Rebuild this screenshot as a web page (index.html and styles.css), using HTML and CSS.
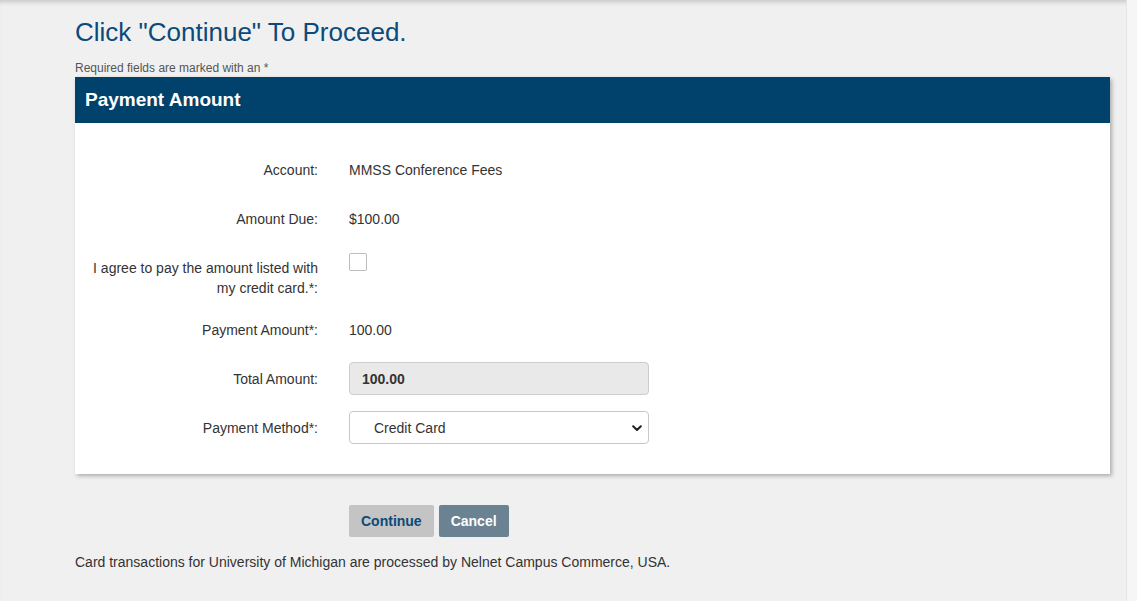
FILE: index.html
```html
<!DOCTYPE html>
<html lang="en">
<head>
<meta charset="utf-8">
<title>Payment Amount</title>
<link rel="stylesheet" href="styles.css">
</head>
<body>
<div class="page">
  <main class="main">
    <h1 class="title">Click "Continue" To Proceed.</h1>
    <p class="required">Required fields are marked with an *</p>
    <section class="card">
      <h2 class="card-header">Payment Amount</h2>
      <div class="card-body">
        <div class="row">
          <div class="label">Account:</div>
          <div class="value">MMSS Conference Fees</div>
        </div>
        <div class="row">
          <div class="label">Amount Due:</div>
          <div class="value">$100.00</div>
        </div>
        <div class="row">
          <div class="label">I agree to pay the amount listed with my credit card.*:</div>
          <div class="value"><input class="check" type="checkbox" aria-label="agree"></div>
        </div>
        <div class="row">
          <div class="label">Payment Amount*:</div>
          <div class="value">100.00</div>
        </div>
        <div class="row">
          <div class="label">Total Amount:</div>
          <div class="field"><input class="readonly" type="text" value="100.00" readonly></div>
        </div>
        <div class="row">
          <div class="label">Payment Method*:</div>
          <div class="field select-wrap">
            <select class="select"><option>Credit Card</option></select>
            <svg class="chev" width="10" height="7" viewBox="0 0 10 7"><path d="M1.2 1.3 L5 5 L8.8 1.3" fill="none" stroke="#222" stroke-width="2.1" stroke-linecap="round" stroke-linejoin="round"/></svg>
          </div>
        </div>
      </div>
    </section>
    <div class="actions">
      <button class="btn btn-continue" type="button">Continue</button>
      <button class="btn btn-cancel" type="button">Cancel</button>
    </div>
    <p class="footer">Card transactions for University of Michigan are processed by Nelnet Campus Commerce, USA.</p>
  </main>
  <div class="rail"></div>
</div>
</body>
</html>
```

FILE: styles.css
```css
html, body {
  margin: 0;
  padding: 0;
  height: 100%;
}
body {
  font-family: "Liberation Sans", Arial, Helvetica, sans-serif;
  color: #333;
  background: #f0f0f0;
}
.page {
  display: flex;
  min-height: 100vh;
  box-shadow: inset 0 5px 5px -3px rgba(0, 0, 0, 0.18);
}
.main {
  flex: 1;
  padding: 0 16px 0 75px;
}
.rail {
  width: 10px;
  background: #f6f6f6;
  border-left: 1px solid #e4e4e4;
}
.title {
  margin: 17px 0 0;
  font-size: 26px;
  line-height: 30px;
  font-weight: normal;
  color: #0b4a7a;
}
.required {
  margin: 15px 0 0;
  font-size: 12px;
  line-height: 13px;
  color: #555;
}
.card {
  margin-top: 2px;
  background: #fff;
  box-shadow: 2px 2px 4px rgba(0, 0, 0, 0.28);
}
.card-header {
  margin: 0;
  height: 46px;
  line-height: 45px;
  padding: 0 10px;
  background: #01426d;
  color: #fff;
  font-size: 19px;
  font-weight: bold;
}
.card-body {
  padding: 31px 0 29px;
  display: flex;
  flex-direction: column;
  gap: 16px;
}
.row {
  display: grid;
  grid-template-columns: 243px 300px;
  column-gap: 31px;
  min-height: 33px;
  font-size: 14px;
}
.label {
  text-align: right;
  padding-top: 6px;
  line-height: 20px;
  padding-left: 12px;
}
.value {
  padding-top: 6px;
  line-height: 20px;
}
.check {
  appearance: none;
  -webkit-appearance: none;
  width: 18px;
  height: 18px;
  margin: -5px 0 0;
  border: 1px solid #bcbcbc;
  border-radius: 2px;
  background: #fff;
  display: block;
}
.field {
  height: 33px;
  margin-top: -1px;
}
.readonly {
  box-sizing: border-box;
  width: 300px;
  height: 33px;
  margin: 0;
  padding: 0 12px;
  border: 1px solid #ccc;
  border-radius: 4px;
  background: #e9e9e9;
  font-family: inherit;
  font-size: 14px;
  font-weight: bold;
  color: #333;
  outline: none;
}
.select-wrap {
  position: relative;
  width: 300px;
}
.select {
  appearance: none;
  -webkit-appearance: none;
  box-sizing: border-box;
  width: 300px;
  height: 33px;
  margin: 0;
  padding: 0 30px 0 24px;
  border: 1px solid #c8c8c8;
  border-radius: 4px;
  background: #fff;
  font-family: inherit;
  font-size: 14px;
  color: #333;
}
.chev {
  position: absolute;
  right: 7px;
  top: 14px;
  pointer-events: none;
}
.actions {
  margin-top: 31px;
  padding-left: 274px;
  display: flex;
  gap: 5px;
}
.btn {
  height: 32px;
  padding: 0 12px;
  border: none;
  border-radius: 2px;
  font-family: inherit;
  font-size: 14px;
  font-weight: bold;
  cursor: pointer;
}
.btn-continue {
  background: #c4c4c4;
  color: #0b4a7a;
}
.btn-cancel {
  background: #6a8292;
  color: #fff;
}
.footer {
  margin: 15px 0 0;
  font-size: 14px;
  line-height: 20px;
  color: #333;
}
```
